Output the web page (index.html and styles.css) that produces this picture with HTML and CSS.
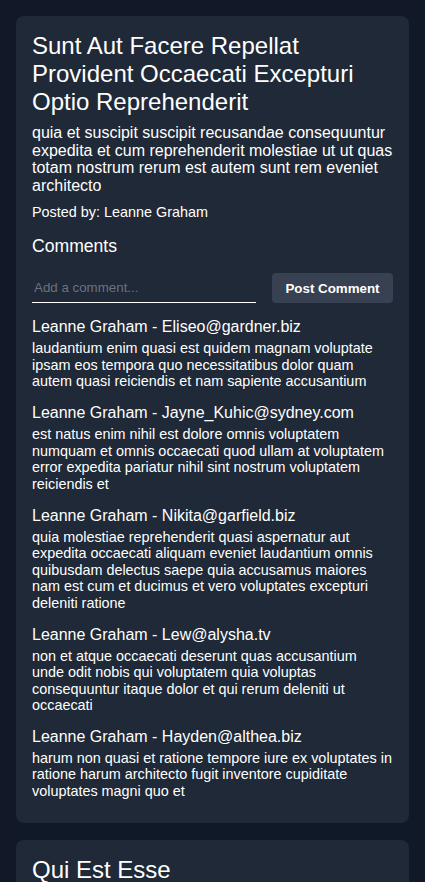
FILE: index.html
```html
<!DOCTYPE html>
<html>
<head>
<meta charset="utf-8">
<link rel="stylesheet" href="styles.css">
</head>
<body>
<main class="feed">
  <article class="card">
    <h1 class="title">Sunt Aut Facere Repellat Provident Occaecati Excepturi Optio Reprehenderit</h1>
    <p class="body">quia et suscipit suscipit recusandae consequuntur expedita et cum reprehenderit molestiae ut ut quas totam nostrum rerum est autem sunt rem eveniet architecto</p>
    <p class="author">Posted by: Leanne Graham</p>
    <section class="comments">
      <h2 class="comments-title">Comments</h2>
      <form class="comment-form">
        <input class="comment-input" type="text" placeholder="Add a comment...">
        <button class="comment-btn" type="button">Post Comment</button>
      </form>
      <div class="comment">
        <h3 class="comment-name">Leanne Graham - Eliseo@gardner.biz</h3>
        <p class="comment-body">laudantium enim quasi est quidem magnam voluptate ipsam eos tempora quo necessitatibus dolor quam autem quasi reiciendis et nam sapiente accusantium</p>
      </div>
      <div class="comment">
        <h3 class="comment-name">Leanne Graham - Jayne_Kuhic@sydney.com</h3>
        <p class="comment-body">est natus enim nihil est dolore omnis voluptatem numquam et omnis occaecati quod ullam at voluptatem error expedita pariatur nihil sint nostrum voluptatem reiciendis et</p>
      </div>
      <div class="comment">
        <h3 class="comment-name">Leanne Graham - Nikita@garfield.biz</h3>
        <p class="comment-body">quia molestiae reprehenderit quasi aspernatur aut expedita occaecati aliquam eveniet laudantium omnis quibusdam delectus saepe quia accusamus maiores nam est cum et ducimus et vero voluptates excepturi deleniti ratione</p>
      </div>
      <div class="comment">
        <h3 class="comment-name">Leanne Graham - Lew@alysha.tv</h3>
        <p class="comment-body">non et atque occaecati deserunt quas accusantium unde odit nobis qui voluptatem quia voluptas consequuntur itaque dolor et qui rerum deleniti ut occaecati</p>
      </div>
      <div class="comment">
        <h3 class="comment-name">Leanne Graham - Hayden@althea.biz</h3>
        <p class="comment-body">harum non quasi et ratione tempore iure ex voluptates in ratione harum architecto fugit inventore cupiditate voluptates magni quo et</p>
      </div>
    </section>
  </article>
  <article class="card">
    <h1 class="title">Qui Est Esse</h1>
    <p class="body">est rerum tempore vitae sequi sint nihil reprehenderit dolor beatae ea dolores neque fugiat blanditiis voluptate porro vel nihil molestiae ut reiciendis qui aperiam non debitis possimus qui neque nisi nulla</p>
  </article>
</main>
</body>
</html>
```
FILE: styles.css
```css
html, body {
  margin: 0;
  padding: 0;
  background: #111827;
  color: #ffffff;
  font-family: "Liberation Sans", Arial, sans-serif;
}
.feed {
  padding: 16px;
  display: flex;
  flex-direction: column;
  gap: 17px;
}
.card {
  background: #1f2937;
  border-radius: 8px;
  padding: 16px;
}
.title {
  margin: 0;
  font-size: 24px;
  font-weight: 400;
  line-height: 28px;
}
.body {
  margin: 8px 0 0;
  font-size: 16px;
  line-height: 17.6px;
}
.author {
  margin: 9.5px 0 0;
  font-size: 14.4px;
  line-height: 16.5px;
}
.comments {
  margin-top: 15.5px;
}
.comments-title {
  margin: 0;
  font-size: 17.6px;
  font-weight: 400;
  line-height: 20.5px;
}
.comment-form {
  display: flex;
  align-items: flex-end;
  gap: 16px;
  margin: 17px 0 15px;
}
.comment-input {
  flex: 1;
  min-width: 0;
  background: transparent;
  border: none;
  border-bottom: 1px solid #ffffff;
  color: #ffffff;
  font-family: "Liberation Sans", Arial, sans-serif;
  font-size: 13.33px;
  line-height: 15px;
  padding: 7px 2px;
  outline: none;
}
.comment-input::placeholder {
  color: #6b7280;
}
.comment-btn {
  background: #374151;
  color: #ffffff;
  border: none;
  border-radius: 4px;
  font-family: "Liberation Sans", Arial, sans-serif;
  font-size: 13.33px;
  font-weight: 700;
  line-height: 15px;
  padding: 7.5px 13.5px;
}
.comment {
  margin-bottom: 14.4px;
  padding-right: 0.5px;
}
.comment:last-child {
  margin-bottom: 8px;
}
.comment-name {
  margin: 0;
  font-size: 16px;
  font-weight: 400;
  line-height: 18px;
}
.comment-body {
  margin: 4px 0 0;
  font-size: 14.4px;
  line-height: 16.5px;
}
```
